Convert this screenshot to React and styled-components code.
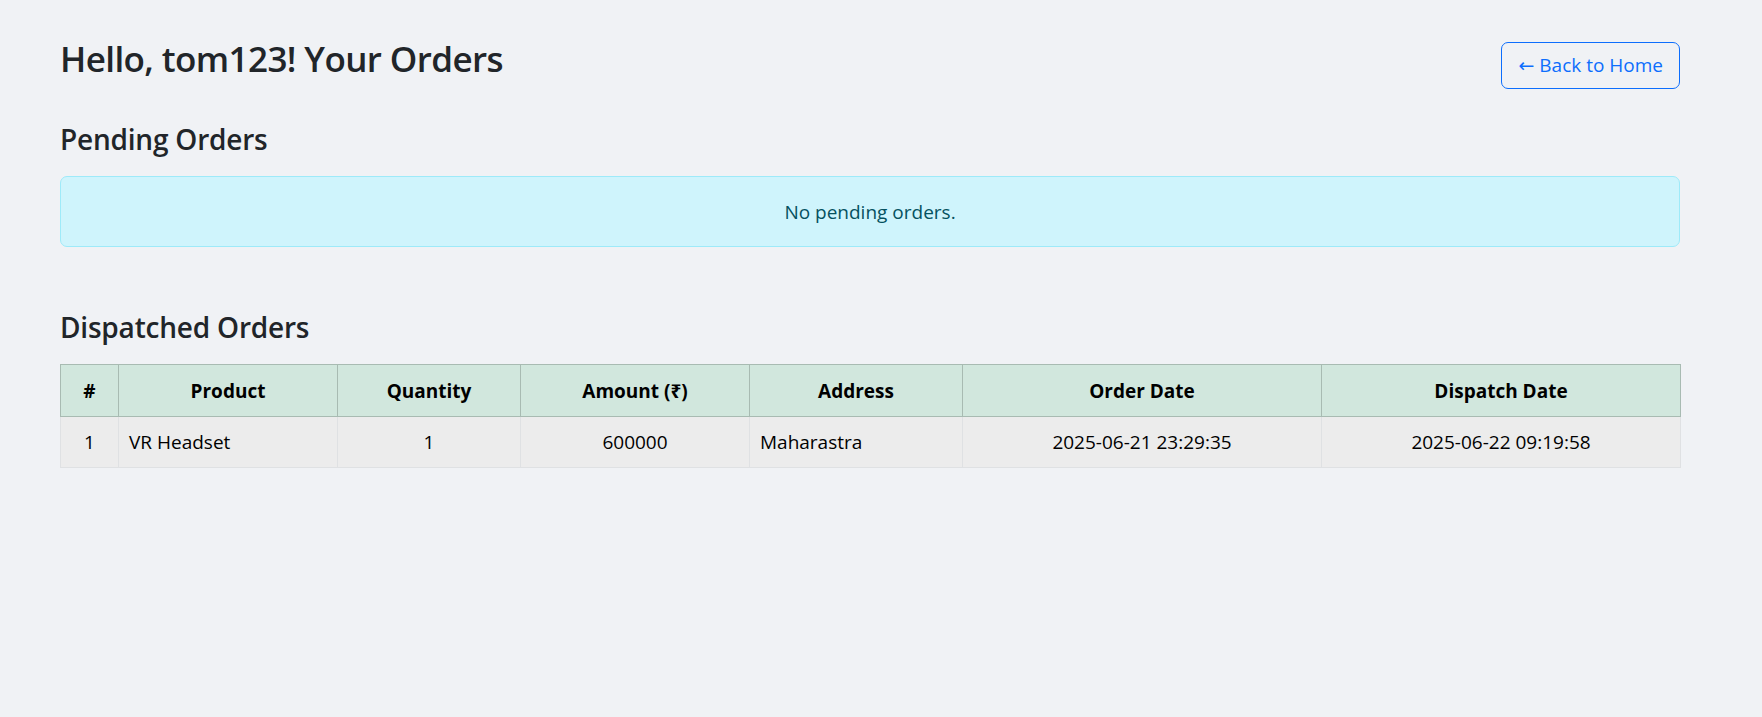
import React from 'react';
import styled, { createGlobalStyle } from 'styled-components';

const GlobalStyle = createGlobalStyle`
  html, body {
    margin: 0;
    padding: 0;
    background: #f0f2f5;
  }
  body {
    font-family: "Open Sans", "Noto Sans", "DejaVu Sans", sans-serif;
    font-size: 19px;
    line-height: 30px;
    color: #212529;
  }
`;

const Page = styled.div`
  width: 1620px;
  padding: 35px 0 40px 60px;
`;

const Header = styled.div`
  display: flex;
  justify-content: space-between;
  align-items: center;
  margin-bottom: 28px;
`;

const Title = styled.h2`
  margin: 0 0 10px;
  font-size: 35px;
  line-height: 48px;
  font-weight: 600;
  letter-spacing: -0.6px;
  color: #212529;
`;

const BackButton = styled.button`
  font-family: inherit;
  font-size: 19px;
  line-height: 30px;
  padding: 7.5px 16px;
  margin-top: 2px;
  color: #0d6efd;
  background: transparent;
  border: 1px solid #0d6efd;
  border-radius: 7px;
  cursor: pointer;

  &:hover {
    background: #0d6efd;
    color: #fff;
  }
`;

const Section = styled.section`
  margin-top: ${(p) => p.$top || 0}px;
`;

const SectionTitle = styled.h4`
  margin: 0 0 19px;
  font-size: 28px;
  line-height: 36px;
  font-weight: 600;
  letter-spacing: -0.2px;
  color: #212529;
`;

const InfoAlert = styled.div`
  padding: 19.5px 20px;
  text-align: center;
  color: #055160;
  background: #cff4fc;
  border: 1px solid #9eeaf9;
  border-radius: 7px;
`;

const Table = styled.table`
  width: 1620px;
  table-layout: fixed;
  border-collapse: collapse;
  color: #000;
`;

const Col = styled.col`
  width: ${(p) => p.$w}px;
`;

const Th = styled.th`
  padding: 10.5px 10px;
  text-align: center;
  font-weight: 700;
  background: #d1e7dd;
  border: 1px solid #a8bbb2;
`;

const Td = styled.td`
  padding: 10px 10px;
  text-align: ${(p) => (p.$left ? 'left' : 'center')};
  background: #ececec;
  border: 1px solid #dfe1e3;
`;

const columns = [
  { label: '#', w: 58 },
  { label: 'Product', w: 219 },
  { label: 'Quantity', w: 183 },
  { label: 'Amount (₹)', w: 229 },
  { label: 'Address', w: 213 },
  { label: 'Order Date', w: 359 },
  { label: 'Dispatch Date', w: 359 },
];

const dispatched = [
  {
    id: 1,
    product: 'VR Headset',
    quantity: 1,
    amount: 600000,
    address: 'Maharastra',
    orderDate: '2025-06-21 23:29:35',
    dispatchDate: '2025-06-22 09:19:58',
  },
];

const App = () => {
  return (
    <>
      <GlobalStyle />
      <Page>
        <Header>
          <Title>Hello, tom123! Your Orders</Title>
          <BackButton>← Back to Home</BackButton>
        </Header>

        <Section>
          <SectionTitle>Pending Orders</SectionTitle>
          <InfoAlert>No pending orders.</InfoAlert>
        </Section>

        <Section $top={62}>
          <SectionTitle>Dispatched Orders</SectionTitle>
          <Table>
            <colgroup>
              {columns.map((c) => (
                <Col key={c.label} $w={c.w} />
              ))}
            </colgroup>
            <thead>
              <tr>
                {columns.map((c) => (
                  <Th key={c.label}>{c.label}</Th>
                ))}
              </tr>
            </thead>
            <tbody>
              {dispatched.map((o, i) => (
                <tr key={o.id}>
                  <Td>{i + 1}</Td>
                  <Td $left>{o.product}</Td>
                  <Td>{o.quantity}</Td>
                  <Td>{o.amount}</Td>
                  <Td $left>{o.address}</Td>
                  <Td>{o.orderDate}</Td>
                  <Td>{o.dispatchDate}</Td>
                </tr>
              ))}
            </tbody>
          </Table>
        </Section>
      </Page>
    </>
  );
};

export default App;
